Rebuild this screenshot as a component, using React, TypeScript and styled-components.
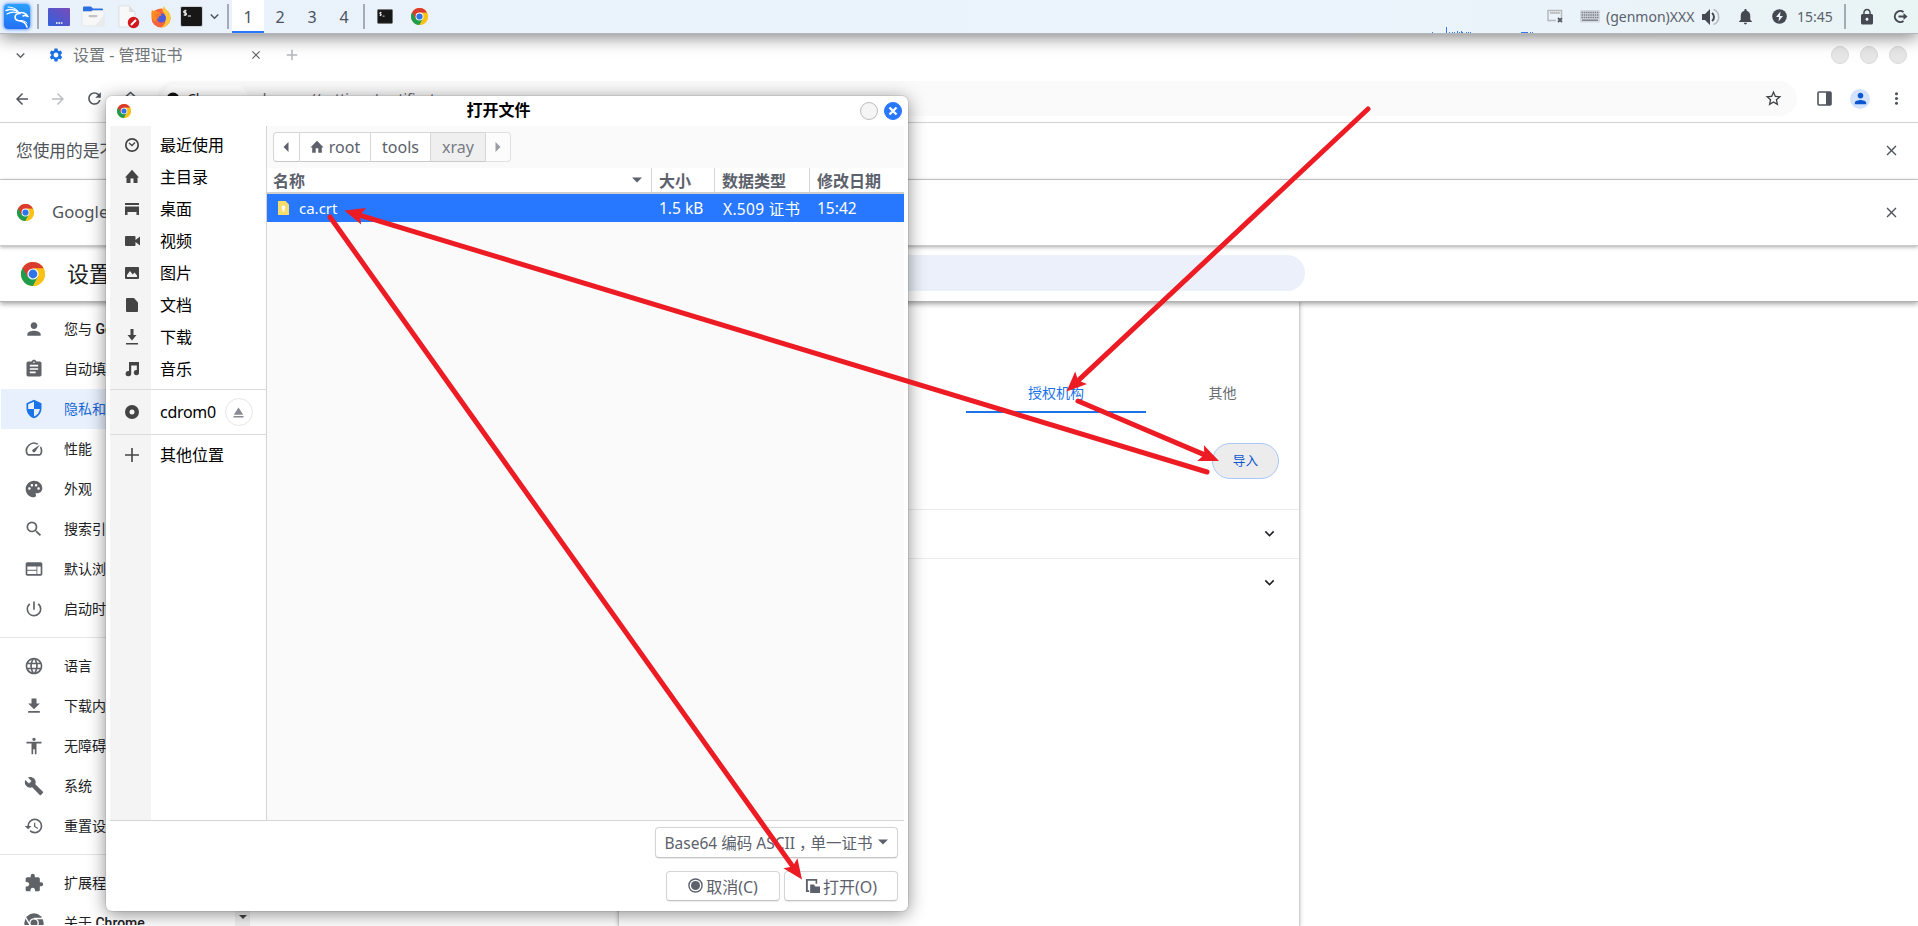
import React from "react";
import styled, { createGlobalStyle, css } from "styled-components";
import {
  MdPerson, MdAssignment, MdSecurity, MdSpeed, MdPalette, MdSearch, MdWeb,
  MdPowerSettingsNew, MdLanguage, MdFileDownload, MdAccessibility, MdBuild,
  MdRestore, MdExtension, MdSettings, MdClose, MdAdd, MdArrowBack, MdArrowForward,
  MdRefresh, MdOutlineHome, MdStarBorder, MdMoreVert, MdExpandMore,
  MdNotifications, MdLock, MdEject,
} from "react-icons/md";

const GlobalStyle = createGlobalStyle`
  * { box-sizing: border-box; }
  html, body { margin: 0; background: #fff; }
  body { font-family: "Noto Sans", "Noto Sans CJK SC", sans-serif; font-size: 16px; }
  svg { display: block; flex: none; }
`;

const Desktop = styled.div`
  position: relative;
  display: flex;
  flex-direction: column;
  width: 1918px;
  height: 926px;
  overflow: hidden;
  background: #fff;
`;

/* ---------- desktop panel ---------- */

const Panel = styled.header`
  position: relative;
  z-index: 2;
  display: flex;
  align-items: center;
  flex: none;
  height: 34px;
  padding-left: 4px;
  background: linear-gradient(90deg, #e9f1fa 0%, #ebf3fc 70%, #e9f4f5 100%);
  border-bottom: 1px solid #b2b7bb;
  box-shadow: 0 3px 17px rgba(0, 0, 0, 0.5);
`;

const Slot = styled.div<{ $w: number }>`
  display: flex;
  align-items: center;
  justify-content: center;
  flex: none;
  width: ${(p) => p.$w}px;
  height: 100%;
`;

const KaliTile = styled.div`
  display: flex;
  width: 26px;
  height: 25px;
  border-radius: 4px;
  background: linear-gradient(180deg, #2aa0ff, #2470f5);
  box-shadow: 0 0 3px 1px #6ba4ff;
`;

const Divider = styled.i<{ $m: string }>`
  flex: none;
  width: 2px;
  height: 25px;
  margin: ${(p) => p.$m};
  background: #a6aab2;
`;

const Workspace = styled.div<{ $active?: boolean }>`
  display: flex;
  align-items: center;
  justify-content: center;
  width: 32px;
  height: 33px;
  color: #4b5162;
  border-top: 2px solid transparent;
  border-bottom: 2px solid transparent;
  ${(p) => p.$active && css`
    background: #fff;
    border-color: #fff #fff #2777ff;
  `}
`;

const Fill = styled.div`
  flex: 1;
`;

const Graph = styled.div`
  align-self: flex-end;
  width: 105px;
`;

const PanelText = styled.span<{ $w: number }>`
  width: ${(p) => p.$w}px;
  font-size: 14px;
  white-space: nowrap;
  color: #5c616c;
`;

/* ---------- browser ---------- */

const TabStrip = styled.div`
  display: flex;
  align-items: center;
  flex: none;
  height: 42px;
  padding: 0 11px 0 0;
  color: #5f6368;
`;

const TabTitle = styled.span`
  width: 173px;
  padding: 0 0 2px 1px;
  white-space: nowrap;
  color: #74777b;
`;

const WinDot = styled.i`
  width: 18px;
  height: 18px;
  margin-left: 11px;
  border-radius: 50%;
  background: #e6e6e6;
  border: 1px solid #dadada;
`;

const Toolbar = styled.div`
  display: flex;
  align-items: center;
  flex: none;
  height: 47px;
  padding: 0 4px 1px 4px;
  border-bottom: 1px solid #d0d2d4;
  color: #50545c;
`;

const Omnibox = styled.div`
  display: flex;
  align-items: center;
  justify-content: space-between;
  width: 1641px;
  height: 35px;
  margin: 0 9px 0 9px;
  padding: 0 14px 0 5px;
  border-radius: 18px;
  background: #fafafa;
  font-size: 14px;
`;

const Chip = styled.div`
  display: flex;
  align-items: center;
  gap: 7px;
  width: 86px;
  height: 27px;
  padding-left: 4px;
  border-radius: 14px;
  background: #fff;
  color: #202124;
`;

const Address = styled.div`
  flex: 1;
  padding-left: 8px;
  color: #5f6368;
`;

const Avatar = styled.div`
  display: flex;
  align-items: center;
  justify-content: center;
  width: 20px;
  height: 20px;
  border-radius: 50%;
  background: #d3e3fd;
  color: #0b57d0;
`;

const InfoBar = styled.div<{ $h: number; $last?: boolean }>`
  position: relative;
  display: flex;
  align-items: center;
  flex: none;
  height: ${(p) => p.$h}px;
  padding: 0 18px 1px 16px;
  font-size: 16.7px;
  color: #50545a;
  background: #fff;
  border-bottom: 1px solid #cfd1d2;
  ${(p) => p.$last && css`
    z-index: 1;
    padding-left: 17px;
    border-color: #c8cbca;
    box-shadow: 0 1px 4px rgba(0, 0, 0, 0.35);
  `}
`;

const InfoText = styled.span<{ $indent?: number }>`
  flex: 1;
  padding: 0 0 2px ${(p) => p.$indent || 0}px;
  white-space: nowrap;
`;

const PageHeader = styled.div`
  position: relative;
  display: flex;
  align-items: center;
  flex: none;
  height: 56px;
  padding-left: 21px;
  background: #fff;
  border-bottom: 1px solid #b0b3b2;
  box-shadow: 0 2px 5px rgba(0, 0, 0, 0.36);
`;

const PageTitle = styled.span`
  width: 556px;
  padding: 0 0 4px 22px;
  font-size: 22px;
  color: #202124;
`;

const SearchField = styled.div`
  width: 704px;
  height: 36px;
  border-radius: 18px;
  background: #ebf0fa;
  margin-top: -1px;
`;

const PageBody = styled.div`
  display: flex;
  flex: 1;
  min-height: 0;
`;

const Menu = styled.nav`
  flex: none;
  width: 235px;
  height: 623px;
  padding-top: 7px;
  overflow: hidden;
`;

const MenuRow = styled.div<{ $on?: boolean }>`
  display: flex;
  align-items: center;
  gap: 20px;
  height: 40px;
  padding: 0 0 1px 23px;
  margin-left: 1px;
  font-family: Roboto, "Noto Sans CJK SC", sans-serif;
  font-size: 14px;
  white-space: nowrap;
  color: ${(p) => (p.$on ? "#1a68d6" : "#202124")};
  background: ${(p) => (p.$on ? "#e8f0fe" : "transparent")};
  svg { color: ${(p) => (p.$on ? "#1a73e8" : "#5f6368")}; }
`;

const MenuText = styled.span`
  padding-bottom: 1px;
  b { font-weight: 500; }
`;

const MenuRule = styled.div`
  height: 1px;
  margin: 8px 0;
  background: #e4e5e7;
`;

const ScrollTrack = styled.div`
  display: flex;
  flex-direction: column;
  justify-content: flex-end;
  align-items: center;
  width: 15px;
  padding-bottom: 5px;
  background: #f1f1f1;
`;

const Gutter = styled.div`
  width: 368px;
`;

const Card = styled.main`
  width: 682px;
  padding-top: 70px;
  border: solid #cfcfcf;
  border-width: 0 1px;
  box-shadow: 0 0 4px rgba(0, 0, 0, 0.25);
  font-family: Roboto, "Noto Sans CJK SC", sans-serif;
  font-size: 14px;
`;

const CertTabs = styled.div`
  display: flex;
  height: 41px;
  padding-left: 347px;
`;

const CertTab = styled.div<{ $w: number; $on?: boolean }>`
  display: flex;
  align-items: center;
  justify-content: center;
  width: ${(p) => p.$w}px;
  color: ${(p) => (p.$on ? "#1a73e8" : "#6a6d71")};
  border-bottom: 2px solid ${(p) => (p.$on ? "#1a73e8" : "transparent")};
`;

const ImportRow = styled.div`
  display: flex;
  justify-content: flex-end;
  height: 96px;
  padding: 30px 20px 0 0;
`;

const ImportButton = styled.button`
  width: 67px;
  height: 36px;
  padding: 0 0 3px;
  border: 1px solid #a8c7fa;
  border-radius: 18px;
  background: #ececec;
  font: 400 12.7px Roboto, "Noto Sans CJK SC", sans-serif;
  color: #0b57d0;
`;

const CertRow = styled.div`
  display: flex;
  align-items: center;
  justify-content: flex-end;
  height: 49px;
  padding: 0 20px 1px 0;
  border-top: 1px solid #ebebeb;
  color: #202124;
`;

/* ---------- file dialog ---------- */

const Dialog = styled.section`
  position: absolute;
  z-index: 3;
  left: 106px;
  top: 96px;
  display: flex;
  flex-direction: column;
  width: 802px;
  height: 815px;
  padding: 0 4px;
  border-radius: 6px;
  background: #fff;
  box-shadow: 0 0 0 1px rgba(0, 0, 0, 0.07), 0 3px 18px rgba(0, 0, 0, 0.46);
  color: #5c616c;
`;

const TitleBar = styled.div`
  display: flex;
  align-items: center;
  height: 30px;
  padding: 0 2px 0 7px;
`;

const DialogTitle = styled.h1`
  flex: 1;
  margin: 0;
  padding: 0 0 2px 12px;
  text-align: center;
  font-size: 16px;
  font-weight: 700;
  line-height: 26px;
  color: #000;
`;

const RoundButton = styled.div<{ $blue?: boolean }>`
  display: flex;
  align-items: center;
  justify-content: center;
  width: 18px;
  height: 18px;
  margin-left: 6px;
  border-radius: 50%;
  border: 1px solid ${(p) => (p.$blue ? "#2777ff" : "#bcbcbc")};
  background: ${(p) => (p.$blue ? "#2777ff" : "#f5f5f5")};
`;

const DialogBody = styled.div`
  display: flex;
  height: 695px;
  border-bottom: 1px solid #d5d5d5;
`;

const Places = styled.div`
  width: 157px;
  padding-top: 3px;
  border-right: 1px solid #d5d5d5;
  background: linear-gradient(90deg, #f4f4f4 41px, #fff 41px);
`;

const PlaceGroup = styled.div`
  height: 260px;
`;

const Place = styled.div<{ $h?: number }>`
  display: flex;
  align-items: center;
  height: ${(p) => p.$h || 32}px;
  color: #000;
`;

const PlaceName = styled.span`
  padding-bottom: 2px;
`;

const PlaceIcon = styled.span`
  display: flex;
  justify-content: center;
  width: 44px;
  margin-right: 6px;
  color: #444;
`;

const PlaceRule = styled.div`
  height: 1px;
  background: #dcdcdc;
`;

const DriveName = styled.span`
  letter-spacing: -0.3px;
`;

const EjectButton = styled.div`
  display: flex;
  align-items: center;
  justify-content: center;
  width: 28px;
  height: 28px;
  margin-left: 9px;
  border: 1px solid #e6e6e6;
  border-radius: 50%;
  color: #888b94;
`;

const Files = styled.div`
  flex: 1;
  background: #fafafa;
`;

const PathBar = styled.div`
  display: flex;
  height: 42px;
  padding: 6px 0 0 6px;
`;

const Crumb = styled.div<{ $w: number; $kind?: "first" | "last" | "current" }>`
  display: flex;
  align-items: center;
  justify-content: center;
  gap: 5px;
  width: ${(p) => p.$w}px;
  height: 30px;
  background: #fff;
  border: 1px solid #d6d6d6;
  border-left-width: ${(p) => (p.$kind === "first" ? 1 : 0)}px;
  border-bottom-color: #c9c9c9;
  ${(p) => p.$kind === "first" && css`border-radius: 4px 0 0 4px; padding-right: 2px;`}
  ${(p) => p.$kind === "last" && css`border-radius: 0 4px 4px 0; background: #fcfcfc; border-color: #e0e0e0;`}
  ${(p) => p.$kind === "current" && css`background: #efefef; color: #777b84;`}
`;

const ListHead = styled.div`
  display: flex;
  height: 26px;
  background: #fff;
  border-bottom: 2px solid #cfcfcf;
  font-weight: 700;
`;

const HeadCell = styled.div<{ $w: number; $first?: boolean }>`
  display: flex;
  align-items: center;
  justify-content: space-between;
  width: ${(p) => p.$w}px;
  padding: 0 9px 0 ${(p) => (p.$first ? 6 : 7)}px;
  border-left: ${(p) => (p.$first ? 0 : 1)}px solid #d6d6d6;
  white-space: nowrap;
`;

const FileRow = styled.div`
  display: flex;
  align-items: center;
  height: 28px;
  background: #2777ff;
  color: #fff;
  font-size: 15.5px;
`;

const FileCell = styled.div<{ $w: number; $pad: number; $track?: number }>`
  display: flex;
  align-items: center;
  gap: 10px;
  width: ${(p) => p.$w}px;
  padding-left: ${(p) => p.$pad}px;
  letter-spacing: ${(p) => p.$track || 0}px;
  white-space: nowrap;
`;

const FileName = styled.span`
  font-size: 15px;
`;

const Footer = styled.div`
  display: flex;
  flex-direction: column;
  align-items: flex-end;
  gap: 13px;
  padding: 6px 6px 0 0;
`;

const Actions = styled.div`
  display: flex;
  gap: 4px;
`;

const GtkButton = styled.div<{ $w: number; $h: number; $select?: boolean }>`
  display: flex;
  align-items: center;
  justify-content: center;
  gap: ${(p) => (p.$select ? 6 : 3)}px;
  width: ${(p) => p.$w}px;
  height: ${(p) => p.$h}px;
  padding-bottom: 1px;
  border: 1px solid #d4d4d4;
  border-bottom-color: #c4c4c4;
  border-radius: 4px;
  background: #fff;
  box-shadow: 0 1px 1px rgba(0, 0, 0, 0.08);
  font-size: ${(p) => (p.$select ? 15.5 : 16)}px;
  white-space: nowrap;
`;

const Comma = styled.span`
  margin: 0 -4px 0 4px;
`;

const Overlay = styled.svg`
  position: absolute;
  z-index: 4;
  inset: 0;
  pointer-events: none;
`;

/* ---------- drawings ---------- */

const ChromeLogo = ({ size }: { size: number }) => (
  <svg width={size} height={size} viewBox="0 0 24 24">
    <circle cx="12" cy="12" r="12" fill="#fbc116" />
    <path d="M1.6 6A12 12 0 0 0 12 24L17.2 15 12 12z" fill="#1f9d4d" />
    <path d="M12 6.6H22.7A12 12 0 0 0 1.6 6L6.8 15z" fill="#db3a2f" />
    <path d="M12 24L17 14.6 12 6.6H22.7A12 12 0 0 1 12 24z" fill="#fbc116" />
    <circle cx="12" cy="12" r="5.6" fill="#fff" />
    <circle cx="12" cy="12" r="4.4" fill="#2f74e8" />
  </svg>
);

const ChromeMono = () => (
  <svg width="20" height="20" viewBox="0 0 24 24">
    <circle cx="12" cy="12" r="11.6" fill="#5f6368" />
    <circle cx="12" cy="12" r="5" fill="none" stroke="#fff" strokeWidth="1.6" />
    <path d="M12 6.6H22.5M7.4 14.6L2.2 5.8M16.6 14.6L11.5 23.4" stroke="#fff" strokeWidth="1.6" />
  </svg>
);

const KaliDragon = () => (
  <svg width="26" height="25" viewBox="0 0 26 25" fill="none" stroke="#fff" strokeLinecap="round" strokeLinejoin="round">
    <path d="M2 6.5C7 4.5 12 5.5 16 9.5" strokeWidth="1.5" />
    <path d="M3 10C7 7.5 11 7.5 15 9.5" strokeWidth="1.2" />
    <path d="M4 3C8 3 12 4.5 14 7" strokeWidth="1" />
    <path d="M15 9C18 8 22 9 24 12.5C22 11.5 20 11.5 19 12" strokeWidth="1.5" />
    <path d="M15 9.5C10 10 10 15.5 14 16.5C19 17 22 19 23 23" strokeWidth="1.6" />
    <path d="M15 16.5C18 16 21 17 23 19" strokeWidth="1" />
  </svg>
);

const DesktopIcon = () => (
  <svg width="22" height="18" viewBox="0 0 22 18">
    <defs>
      <linearGradient id="dk" x1="0" y1="1" x2="1" y2="0">
        <stop offset="0" stopColor="#2f62dc" />
        <stop offset="1" stopColor="#7a4bb8" />
      </linearGradient>
    </defs>
    <rect width="22" height="18" rx="1" fill="url(#dk)" />
    <path d="M8 15h1.6M10.4 15H12M12.8 15h1.6" stroke="#fff" strokeWidth="1.4" />
  </svg>
);

const FolderIcon = () => (
  <svg width="24" height="21" viewBox="0 0 24 21">
    <path d="M2 1.5Q2 .5 3 .5H10L12 2.5H21Q22 2.5 22 3.5V8H2z" fill="#2b6fe0" />
    <path d="M1 5.5H10L12 4.5H22Q23 4.5 23 5.5V19.5Q23 20 22 20H2Q1 20 1 19z" fill="#f7f7f7" stroke="#dcdfe3" strokeWidth=".6" />
    <path d="M14 20L23 9V20z" fill="#eaeaea" />
    <rect x="7.5" y="9" width="9" height="2.2" rx="1.1" fill="#c3c3c3" />
  </svg>
);

const BlockedFile = () => (
  <svg width="22" height="24" viewBox="0 0 22 24">
    <path d="M1 1H11L17 7V22H1z" fill="#f8f8f8" stroke="#d5d8dc" strokeWidth=".7" />
    <path d="M11 1L17 7H11z" fill="#dedede" />
    <circle cx="15.5" cy="17.5" r="5.7" fill="#d2181c" />
    <path d="M13 20L18 15" stroke="#fff" strokeWidth="2" />
  </svg>
);

const FirefoxIcon = () => (
  <svg width="22" height="22" viewBox="0 0 22 22">
    <circle cx="11" cy="12" r="9.5" fill="#f4633c" />
    <path d="M14 0C14 3 20.5 5 20.7 12A9.7 9.7 0 0 1 11 21.5C17 18 17 10 12.5 5C12.5 3 13 1 14 0z" fill="#ffc53d" />
    <path d="M2 4L4 5.5L5 3.5L7 6C10 6 11 7 11 8L8 10L5 16C1.5 13 .5 9 2 4z" fill="#ff8a1e" />
    <circle cx="11.5" cy="12" r="4.5" fill="#4a5be0" />
    <path d="M5 8C8 6.5 11 7.5 12 9.5C10 9 8 11 8.5 13C6 12 5 10 5 8z" fill="#f9782d" />
  </svg>
);

const TerminalIcon = ({ w, h, line }: { w: number; h: number; line: string }) => (
  <svg width={w} height={h} viewBox="0 0 22 20">
    <rect x=".5" y=".5" width="21" height="19" rx="1.5" fill="#171717" stroke={line} />
    <path d="M6.2 4.5H4.5Q3.5 4.5 3.5 5.5T4.5 6.5H5.2Q6.2 6.5 6.2 7.5T5.2 8.5H3.5M4.9 3.5V9.5M7.5 9.5H10.5" fill="none" stroke="#fff" strokeWidth="1" />
  </svg>
);

const Triangle = ({ dir, size = 9, color = "#5c616c" }: { dir: "left" | "right" | "down"; size?: number; color?: string }) => {
  const d = { left: "M7.5 0V10L2.5 5z", right: "M2.5 0V10L7.5 5z", down: "M0 2.5H10L5 7.5z" }[dir];
  return <svg width={size} height={size} viewBox="0 0 10 10"><path d={d} fill={color} /></svg>;
};

const Glyph = ({ children, size = 16 }: { children: React.ReactNode; size?: number }) => (
  <svg width={size} height={size} viewBox="0 0 16 16" fill="currentColor">{children}</svg>
);

const places: [string, React.ReactNode][] = [
  ["最近使用", <Glyph><circle cx="8" cy="8" r="6.2" fill="none" stroke="currentColor" strokeWidth="1.7" /><path d="M5 6L8 8.5L11 5.5" fill="none" stroke="currentColor" strokeWidth="1.3" /></Glyph>],
  ["主目录", <Glyph><path d="M8 .8L15 8.5H13.5V14H9.5V9.5H6.5V14H2.5V8.5H1z" /></Glyph>],
  ["桌面", <Glyph><path d="M1 2H15V4H1zM1 5.5H15V14H12.5V11H3.5V14H1z" /></Glyph>],
  ["视频", <Glyph><path d="M1 4Q1 3 2 3H10.5Q11.5 3 11.5 4V7L16 3.5V12.5L11.5 9V12Q11.5 13 10.5 13H2Q1 13 1 12z" /></Glyph>],
  ["图片", <Glyph><path fillRule="evenodd" d="M2 2H14Q15 2 15 3V13Q15 14 14 14H2Q1 14 1 13V3Q1 2 2 2zM3 12H13V10.5L10.5 7.5L8.7 9.5L6 6L3 10z" /></Glyph>],
  ["文档", <Glyph><path d="M3 1H10L14 5.5V14Q14 15 13 15H3Q2 15 2 14V2Q2 1 3 1z" /></Glyph>],
  ["下载", <Glyph><path d="M6.5 0H9.5V6H12.5L8 11.5L3.5 6H6.5zM2 14H14V15.6H2z" /></Glyph>],
  ["音乐", <Glyph><path d="M5 1H15V11.5A2.6 2.6 0 1 1 12.8 9V4.5H7.2V12.5A2.8 2.6 0 1 1 5 10z" /></Glyph>],
];

const menuGroups: [string, React.ReactNode, boolean?][][] = [
  [
    ["您与 Google", <MdPerson size={20} />],
    ["自动填充", <MdAssignment size={20} />],
    ["隐私和安全", <MdSecurity size={20} />, true],
    ["性能", <MdSpeed size={20} />],
    ["外观", <MdPalette size={20} />],
    ["搜索引擎", <MdSearch size={20} />],
    ["默认浏览器", <MdWeb size={20} />],
    ["启动时", <MdPowerSettingsNew size={20} />],
  ],
  [
    ["语言", <MdLanguage size={20} />],
    ["下载内容", <MdFileDownload size={20} />],
    ["无障碍", <MdAccessibility size={20} />],
    ["系统", <MdBuild size={20} />],
    ["重置设置", <MdRestore size={20} />],
  ],
  [
    ["扩展程序", <MdExtension size={20} />],
    ["关于 Chrome", <ChromeMono />],
  ],
];

const Arrow = ({ from, to }: { from: [number, number]; to: [number, number] }) => {
  const dx = to[0] - from[0];
  const dy = to[1] - from[1];
  const len = Math.hypot(dx, dy);
  const ux = dx / len;
  const uy = dy / len;
  const at = (back: number, side: number) =>
    `${to[0] - ux * back - uy * side},${to[1] - uy * back + ux * side}`;
  return (
    <g>
      <line x1={from[0]} y1={from[1]} x2={to[0] - ux * 13} y2={to[1] - uy * 13} stroke="#ed1c24" strokeWidth="5" strokeLinecap="round" />
      <polygon points={[at(0, 0), at(20, 8.6), at(16, 0), at(20, -8.6)].join(" ")} fill="#ed1c24" />
    </g>
  );
};

const loadBars: [number, number][] = [
  [0, 1], [14, 6], [17, 1], [20, 1], [22, 1], [25, 2], [27, 1], [29, 2], [30, 1], [34, 1], [36, 1], [38, 1],
  [89, 1], [90, 1], [91, 1], [92, 1], [93, 1], [94, 1], [95, 1], [98, 1], [100, 1],
];

export default function App() {
  return (
    <Desktop>
      <GlobalStyle />
      <Panel>
        <KaliTile><KaliDragon /></KaliTile>
        <Divider $m="0 8px 0 7px" />
        <Slot $w={24}><DesktopIcon /></Slot>
        <Slot $w={44}><FolderIcon /></Slot>
        <Slot $w={28}><BlockedFile /></Slot>
        <Slot $w={36}><FirefoxIcon /></Slot>
        <Slot $w={24}><TerminalIcon w={23} h={21} line="#d0d4d8" /></Slot>
        <Slot $w={22}><MdExpandMore size={17} color="#4b5162" /></Slot>
        <Divider $m="0 3px 0 2px" />
        <Workspace $active>1</Workspace>
        <Workspace>2</Workspace>
        <Workspace>3</Workspace>
        <Workspace>4</Workspace>
        <Divider $m="0 9px 0 3px" />
        <Slot $w={22}><TerminalIcon w={16} h={15} line="#777" /></Slot>
        <Slot $w={46}><ChromeLogo size={17} /></Slot>
        <Fill />
        <Graph>
          <svg width="105" height="7" shapeRendering="crispEdges">
            {loadBars.map(([x, h]) => <rect key={x} x={x} y={7 - h} width="1" height={h} fill="#3a78e8" />)}
          </svg>
        </Graph>
        <Slot $w={37}>
          <svg width="17" height="15" viewBox="0 0 17 15" fill="none" stroke="#b6babd" strokeWidth="1.5">
            <path d="M9 11.5H3V12.5M2.5 11.5H1V1.5H14.5V8M3 4H13" />
            <path d="M3 3.5H13" strokeDasharray="1 1" />
            <path d="M11 9L15 13M15 9L11 13" stroke="#555b62" strokeWidth="1.8" />
          </svg>
        </Slot>
        <Slot $w={32}>
          <svg width="20" height="13" viewBox="0 0 20 13">
            <rect width="20" height="12.5" rx="1" fill="#d3d8de" />
            <path d="M1.5 2.5H18.5M1.5 5H18.5M1.5 7.5H18.5" stroke="#7b8088" strokeWidth="1.4" strokeDasharray="1.5 .7" />
            <path d="M2 10.2H18" stroke="#7b8088" strokeWidth="1.4" />
          </svg>
        </Slot>
        <PanelText $w={96}>(genmon)XXX</PanelText>
        <svg width="18" height="18" viewBox="0 0 18 18" fill="none">
          <path d="M0 6H3L8 1V17L3 12H0z" fill="#454851" />
          <path d="M10 5A5 5 0 0 1 10 13" stroke="#454851" strokeWidth="2" />
          <path d="M11.5 1.5A8 8 0 0 1 11.5 16.5" stroke="#b9bec3" strokeWidth="1.6" />
        </svg>
        <Slot $w={50}><MdNotifications size={19} color="#454851" /></Slot>
        <Slot $w={18}>
          <svg width="15" height="15" viewBox="0 0 15 15"><circle cx="7.5" cy="7.5" r="7.3" fill="#454851" /><path d="M8.5 2.5L4 8H7L6.5 12.5L11 7H8z" fill="#ebf3f7" /></svg>
        </Slot>
        <Slot $w={56}><PanelText $w={38}>15:45</PanelText></Slot>
        <Divider $m="0 5px 0 0" />
        <Slot $w={32}><MdLock size={18} color="#454851" /></Slot>
        <Slot $w={35}>
          <svg width="15" height="15" viewBox="0 0 15 15" fill="none" stroke="#454851" strokeWidth="2">
            <path d="M10.5 3A5.5 5.5 0 1 0 10.5 12M5.5 7.5H11" /><path d="M10.5 4L14.5 7.5L10.5 11z" fill="#454851" stroke="none" />
          </svg>
        </Slot>
      </Panel>

      <TabStrip>
        <Slot $w={40}><MdExpandMore size={17} /></Slot>
        <Slot $w={32}><MdSettings size={16} color="#1a73e8" /></Slot>
        <TabTitle>设置 - 管理证书</TabTitle>
        <Slot $w={22}><MdClose size={14} /></Slot>
        <Slot $w={50}><MdAdd size={18} color="#b4b7ba" /></Slot>
        <Fill />
        <WinDot /><WinDot /><WinDot />
      </TabStrip>

      <Toolbar>
        <Slot $w={36}><MdArrowBack size={18} /></Slot>
        <Slot $w={36}><MdArrowForward size={18} color="#bdbfc3" /></Slot>
        <Slot $w={36}><MdRefresh size={19} /></Slot>
        <Slot $w={36}><MdOutlineHome size={19} /></Slot>
        <Omnibox>
          <Chip>
            <svg width="14" height="14" viewBox="0 0 14 14"><circle cx="7" cy="7" r="6.5" fill="#111" /></svg>
            Chrome
          </Chip>
          <Address>chrome://settings/certificates</Address>
          <MdStarBorder size={19} color="#3c4043" />
        </Omnibox>
        <Slot $w={36}>
          <svg width="15" height="15" viewBox="0 0 15 15"><rect x="1" y="1" width="13" height="13" rx="1" fill="#fff" stroke="#50545c" strokeWidth="1.6" /><path d="M9 1H14V14H9z" fill="#50545c" /></svg>
        </Slot>
        <Slot $w={36}><Avatar><MdPerson size={17} /></Avatar></Slot>
        <Slot $w={36}><MdMoreVert size={19} /></Slot>
      </Toolbar>

      <InfoBar $h={57}>
        <InfoText>您使用的是不</InfoText>
        <MdClose size={17} color="#50545c" />
      </InfoBar>
      <InfoBar $h={66} $last>
        <ChromeLogo size={17} />
        <InfoText $indent={18}>Google</InfoText>
        <MdClose size={17} color="#50545c" />
      </InfoBar>

      <PageHeader>
        <ChromeLogo size={24} />
        <PageTitle>设置</PageTitle>
        <SearchField />
      </PageHeader>

      <PageBody>
        <Menu>
          {menuGroups.map((group, i) => (
            <React.Fragment key={i}>
              {i > 0 && <MenuRule />}
              {group.map(([label, icon, on]) => (
                <MenuRow key={label} $on={on}>
                  {icon}
                  <MenuText>{label.split(" ").map((w, n) => (n ? <b key={w}> {w}</b> : w))}</MenuText>
                </MenuRow>
              ))}
            </React.Fragment>
          ))}
        </Menu>
        <ScrollTrack><Triangle dir="down" size={8} color="#444" /></ScrollTrack>
        <Gutter />
        <Card>
          <CertTabs>
            <CertTab $w={180} $on>授权机构</CertTab>
            <CertTab $w={153}>其他</CertTab>
          </CertTabs>
          <ImportRow><ImportButton>导入</ImportButton></ImportRow>
          <CertRow><MdExpandMore size={19} /></CertRow>
          <CertRow><MdExpandMore size={19} /></CertRow>
        </Card>
      </PageBody>

      <Dialog>
        <TitleBar>
          <ChromeLogo size={14} />
          <DialogTitle>打开文件</DialogTitle>
          <RoundButton />
          <RoundButton $blue>
            <svg width="10" height="10" viewBox="0 0 10 10"><path d="M1.5 1.5L8.5 8.5M8.5 1.5L1.5 8.5" stroke="#fff" strokeWidth="2.3" /></svg>
          </RoundButton>
        </TitleBar>
        <DialogBody>
          <Places>
            <PlaceGroup>
              {places.map(([label, icon]) => (
                <Place key={label}><PlaceIcon>{icon}</PlaceIcon><PlaceName>{label}</PlaceName></Place>
              ))}
            </PlaceGroup>
            <PlaceRule />
            <Place $h={44}>
              <PlaceIcon><Glyph><path fillRule="evenodd" d="M8 1A7 7 0 1 1 8 15A7 7 0 1 1 8 1zM8 5.5A2.5 2.5 0 1 0 8 10.5A2.5 2.5 0 1 0 8 5.5z" /></Glyph></PlaceIcon>
              <DriveName>cdrom0</DriveName>
              <EjectButton><MdEject size={17} /></EjectButton>
            </Place>
            <PlaceRule />
            <Place $h={40}>
              <PlaceIcon><Glyph><path d="M7.2 1H8.8V7.2H15V8.8H8.8V15H7.2V8.8H1V7.2H7.2z" /></Glyph></PlaceIcon>
              <PlaceName>其他位置</PlaceName>
            </Place>
          </Places>
          <Files>
            <PathBar>
              <Crumb $w={27} $kind="first"><Triangle dir="left" size={10} /></Crumb>
              <Crumb $w={71}><Glyph size={14}><path d="M8 .8L15.5 8.5H13.5V14.5H9.5V9.5H6.5V14.5H2.5V8.5H.5z" /></Glyph>root</Crumb>
              <Crumb $w={60}>tools</Crumb>
              <Crumb $w={55} $kind="current">xray</Crumb>
              <Crumb $w={25} $kind="last"><Triangle dir="right" size={10} color="#9a9da4" /></Crumb>
            </PathBar>
            <ListHead>
              <HeadCell $w={384} $first>名称<Triangle dir="down" size={10} /></HeadCell>
              <HeadCell $w={63}>大小</HeadCell>
              <HeadCell $w={95}>数据类型</HeadCell>
              <HeadCell $w={95}>修改日期</HeadCell>
            </ListHead>
            <FileRow>
              <FileCell $w={384} $pad={11}>
                <svg width="11" height="14" viewBox="0 0 11 14">
                  <path d="M0 0H7.5L11 3.5V14H0z" fill="#f6dc6c" />
                  <path d="M5.5 4.5A2 2 0 0 1 6.5 8.2V10.5H4.5V8.2A2 2 0 0 1 5.5 4.5z" fill="#fff" />
                </svg>
                <FileName>ca.crt</FileName>
              </FileCell>
              <FileCell $w={63} $pad={8}>1.5 kB</FileCell>
              <FileCell $w={95} $pad={9} $track={0.3}>X.509 证书</FileCell>
              <FileCell $w={95} $pad={8}>15:42</FileCell>
            </FileRow>
          </Files>
        </DialogBody>
        <Footer>
          <GtkButton $w={243} $h={31} $select>
            <span>Base64 编码 ASCII<Comma>，</Comma>单一证书</span>
            <Triangle dir="down" size={10} />
          </GtkButton>
          <Actions>
            <GtkButton $w={114} $h={30}>
              <Glyph size={15}><circle cx="8" cy="8" r="7" fill="none" stroke="currentColor" strokeWidth="1.5" /><circle cx="8" cy="8" r="4.8" /></Glyph>
              取消(C)
            </GtkButton>
            <GtkButton $w={114} $h={30}>
              <Glyph size={15}><path d="M1 1H13V6H11.3V3H3V13H4.5V15H1z" /><path d="M5.5 7H9.5L11 9H16V16H5.5z" /></Glyph>
              打开(O)
            </GtkButton>
          </Actions>
        </Footer>
      </Dialog>

      <Overlay width="1918" height="926">
        <Arrow from={[1368, 109]} to={[1066.5, 391.5]} />
        <Arrow from={[1078, 401]} to={[1219, 461]} />
        <Arrow from={[1207, 472]} to={[344.5, 210.5]} />
        <Arrow from={[330, 217]} to={[802, 879.5]} />
      </Overlay>
    </Desktop>
  );
}
